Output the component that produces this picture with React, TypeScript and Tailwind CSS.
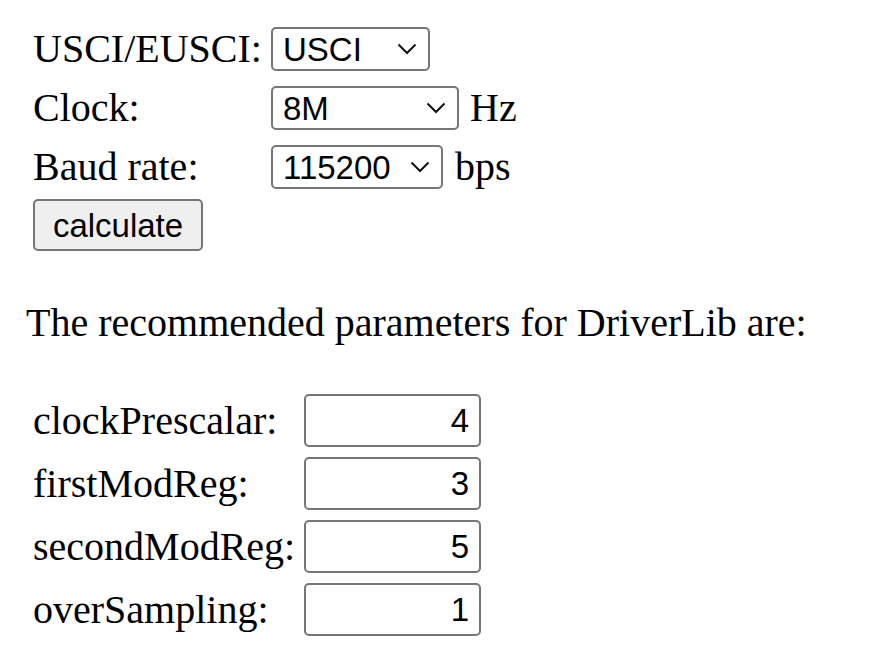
import React, { useState } from 'react';

const serif = "font-['Liberation_Serif','Times_New_Roman',serif]";
const sans = "font-['Liberation_Sans',Arial,sans-serif]";

interface PickerProps {
  value: string;
  options: string[];
  width: string;
  onChange: (v: string) => void;
}

function Picker({ value, options, width, onChange }: PickerProps) {
  return (
    <div className={`relative h-[44px] ${width}`}>
      <select
        value={value}
        onChange={(e) => onChange(e.target.value)}
        className={`h-full w-full appearance-none rounded-[5px] border-2 border-[#767676] bg-white pl-[10px] text-[33px] leading-none text-black outline-none ${sans}`}
      >
        {options.map((o) => (
          <option key={o} value={o}>
            {o}
          </option>
        ))}
      </select>
      <svg
        className="pointer-events-none absolute right-[13px] top-[16px]"
        width="20"
        height="12"
        viewBox="0 0 20 12"
        fill="none"
      >
        <path d="M1.5 1.5 L10 10 L18.5 1.5" stroke="#111" strokeWidth="2" />
      </svg>
    </div>
  );
}

const results = [
  { name: 'clockPrescalar:', value: '4' },
  { name: 'firstModReg:', value: '3' },
  { name: 'secondModReg:', value: '5' },
  { name: 'overSampling:', value: '1' },
];

export default function App() {
  const [module, setModule] = useState('USCI');
  const [clock, setClock] = useState('8M');
  const [baud, setBaud] = useState('115200');

  return (
    <div className={`min-h-[672px] w-[892px] bg-white pl-[26px] pt-[27px] text-black ${serif}`}>
      <div className="pl-[7px]">
        <div className="flex flex-col gap-[15px]">
          <div className="flex h-[44px] items-center">
            <span className="w-[238px] text-[40px] leading-[46px]">USCI/EUSCI:</span>
            <Picker value={module} options={['USCI', 'EUSCI']} width="w-[159px]" onChange={setModule} />
          </div>
          <div className="flex h-[44px] items-center">
            <span className="w-[238px] text-[40px] leading-[46px]">Clock:</span>
            <Picker
              value={clock}
              options={['1M', '4M', '8M', '12M', '16M', '20M', '24M']}
              width="w-[188px]"
              onChange={setClock}
            />
            <span className="ml-[11px] text-[40px] leading-[46px]">Hz</span>
          </div>
          <div className="flex h-[44px] items-center">
            <span className="w-[238px] text-[40px] leading-[46px]">Baud rate:</span>
            <Picker
              value={baud}
              options={['9600', '19200', '38400', '57600', '115200']}
              width="w-[172px]"
              onChange={setBaud}
            />
            <span className="ml-[12px] text-[40px] leading-[46px]">bps</span>
          </div>
        </div>
        <button
          type="button"
          className={`mt-[10px] h-[52px] w-[170px] rounded-[5px] border-2 border-[#767676] bg-[#efefef] text-[33px] leading-none text-black ${sans}`}
        >
          calculate
        </button>
      </div>

      <p className="mt-[49px] text-[40px] leading-[46px]">The recommended parameters for DriverLib are:</p>

      <div className="mt-[48px] flex flex-col gap-[10px] pl-[7px]">
        {results.map((r) => (
          <div key={r.name} className="flex h-[53px] items-center">
            <span className="w-[271px] text-[40px] leading-[46px]">{r.name}</span>
            <input
              readOnly
              value={r.value}
              className={`h-[53px] w-[177px] rounded-[5px] border-2 border-[#767676] bg-white pr-[10px] text-right text-[33px] text-black outline-none ${sans}`}
            />
          </div>
        ))}
      </div>
    </div>
  );
}
